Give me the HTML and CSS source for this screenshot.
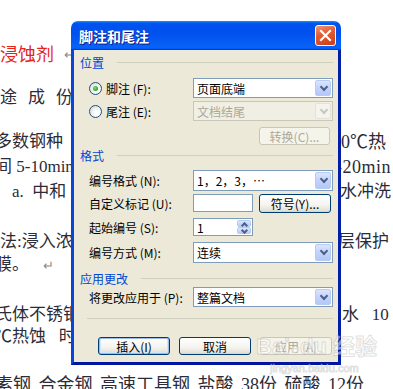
FILE: index.html
```html
<!DOCTYPE html>
<html lang="zh-CN">
  <head>
    <meta charset="UTF-8" />
    <title>脚注和尾注</title>
    <link rel="stylesheet" href="styles.css">
  </head>
  <body>
    <div class="doc">
      <div class="line first"><span class="red">浸蚀剂</span><span class="ret">↵</span></div>
      <div class="line gap-21"><span class="spaced">途成份</span></div>
      <div class="line gap-22"><span class="l cut">多数钢种</span><span class="r back">30℃热</span></div>
      <div class="line gap-3"><span class="l cut">间 5-10min</span><span class="r wide">-20min</span></div>
      <div class="line gap-3"><span class="l indent">a.&nbsp;&nbsp;中和</span><span class="r in4">水冲洗</span></div>
      <div class="line gap-28"><span class="l">法:浸入浓</span><span class="r in2">层保护</span></div>
      <div class="line gap-1"><span class="l cut">膜。 <span class="ret">↵</span></span></div>
      <div class="line gap-28"><span class="l cut">氏体不锈钢</span><span class="r in6">水&nbsp;&nbsp; 10</span></div>
      <div class="line gap-0"><span class="l cut">℃热蚀&nbsp;&nbsp; 时</span></div>
      <div class="line gap-26"><span class="cut last">素钢 合金钢 高速工具钢 盐酸 38份 硫酸 12份</span></div>
    </div>

    <div class="dialog">
      <div class="titlebar">
        <span class="title">脚注和尾注</span>
        <span class="close">
          <svg width="13" height="13" viewBox="0 0 13 13">
            <path d="M2 2 L11 11 M11 2 L2 11" stroke="#fff" stroke-width="2.2" stroke-linecap="square" />
          </svg>
        </span>
      </div>

      <div class="panel">
        <div class="group">位置</div>

        <div class="row sp-8">
          <span class="label"><span class="radio checked"></span>脚注 (F):</span>
          <span class="combo"><span class="value">页面底端</span><span class="drop"></span></span>
        </div>
        <div class="row sp-3">
          <span class="label"><span class="radio"></span>尾注 (E):</span>
          <span class="combo disabled"><span class="value">文档结尾</span><span class="drop"></span></span>
        </div>
        <div class="row end sp-6">
          <span class="btn disabled convert">转换(C)...</span>
        </div>

        <div class="group sp-2">格式</div>

        <div class="row tall sp-7">
          <span class="label">编号格式 (N):</span>
          <span class="combo"><span class="value">1，2，3，…</span><span class="drop"></span></span>
        </div>
        <div class="row short sp-3">
          <span class="label">自定义标记 (U):</span>
          <span class="field"></span>
          <span class="btn symbol">符号(Y)...</span>
        </div>
        <div class="row short sp-6">
          <span class="label">起始编号 (S):</span>
          <span class="field spin">
            <span class="value">1</span>
            <span class="spinner"><span class="up"></span><span class="down"></span></span>
          </span>
        </div>
        <div class="row tall sp-6">
          <span class="label">编号方式 (M):</span>
          <span class="combo"><span class="value">连续</span><span class="drop"></span></span>
        </div>

        <div class="group sp-7">应用更改</div>

        <div class="row sp-1">
          <span class="label">将更改应用于 (P):</span>
          <span class="combo"><span class="value">整篇文档</span><span class="drop"></span></span>
        </div>

        <div class="separator"></div>

        <div class="actions">
          <span class="btn default">插入(I)</span>
          <span class="btn">取消</span>
          <span class="btn disabled">应用 (A)</span>
        </div>
      </div>
    </div>

    <div class="watermark">
      <div class="brand">Bai<span class="paw">●</span>du 经验</div>
      <div class="site">jingyan.baidu.com</div>
    </div>
  </body>
</html>
```

FILE: styles.css
```css
* {
  box-sizing: border-box;
}

html,
body {
  background-color: #fff;
  height: 100%;
  margin: 0;
  overflow: hidden;
}

body {
  font-family: "Liberation Serif", "Noto Sans CJK SC", serif;
  position: relative;
}

/* document behind the dialog */

.doc {
  color: #2c2c38;
  font-size: 17px;
  padding-top: 44px;
}

.line {
  display: flex;
  height: 22px;
  line-height: 22px;
  white-space: nowrap;
}

.gap-0 { margin-top: 0; }
.gap-1 { margin-top: 1px; }
.gap-3 { margin-top: 3px; }
.gap-21 { margin-top: 21px; }
.gap-22 { margin-top: 22px; }
.gap-26 { margin-top: 26px; }
.gap-28 { margin-top: 28px; }

.red {
  color: #e8231c;
  font-size: 18px;
}

.ret {
  color: #8a8a8a;
  font-size: 13px;
  margin-left: 10px;
}

.spaced {
  letter-spacing: 11px;
}

.cut {
  margin-left: -5px;
}

.l {
  flex: none;
  width: 336px;
}

.line .cut.l {
  width: 341px;
}

.l.indent {
  padding-left: 12px;
}

.r {
  flex: none;
}

.r.back {
  font-size: 18px;
  margin-left: -4px;
}

.r.wide {
  font-size: 18px;
  letter-spacing: 0.5px;
}

.r.in2 {
  padding-left: 2px;
}

.r.in4 {
  padding-left: 4px;
}

.r.in6 {
  padding-left: 6px;
}

.last {
  font-size: 18px;
  word-spacing: 3px;
}

/* dialog */

.dialog {
  color: #000;
  display: flex;
  flex-direction: column;
  font-family: "Noto Sans CJK SC", "Liberation Sans", sans-serif;
  font-size: 12px;
  height: 344px;
  left: 71px;
  position: absolute;
  top: 21px;
  width: 270px;
}

.titlebar {
  align-items: center;
  background: linear-gradient(180deg, #0997ff, #0053ee 8%, #0050ee 40%, #0862f6 88%, #0560f5 93%, #005bff 95%, #003dd7 96%, #003dd7);
  border-radius: 7px 7px 0 0;
  display: flex;
  flex: none;
  height: 29px;
  justify-content: space-between;
  padding: 0 5px 0 8px;
}

.title {
  color: #fff;
  font-size: 14px;
  font-weight: bold;
  text-shadow: 1px 1px 0 #0a1883;
}

.close {
  align-items: center;
  background: linear-gradient(160deg, #f39375, #e35d36 40%, #d4471f 80%, #c83e18);
  border: 1px solid #fff;
  border-radius: 3px;
  display: flex;
  height: 21px;
  justify-content: center;
  width: 21px;
}

.panel {
  background-color: #ece9d8;
  border: 3px solid #0a45d8;
  border-bottom-color: #0016a0;
  border-right-color: #001ea8;
  border-top: none;
  display: flex;
  flex: 1;
  flex-direction: column;
  padding: 4px 5px 0 6px;
}

.group {
  align-items: center;
  color: #0046d5;
  display: flex;
  gap: 13px;
  height: 16px;
}

.group::after {
  background-color: #d0d0bf;
  content: "";
  flex: 1;
  height: 1px;
}

.sp-1 { margin-top: 1px; }
.sp-2 { margin-top: 2px; }
.sp-3 { margin-top: 3px; }
.sp-6 { margin-top: 6px; }
.sp-7 { margin-top: 7px; }
.sp-8 { margin-top: 8px; }

.row {
  align-items: center;
  display: flex;
  height: 20px;
  padding-left: 9px;
}

.row.tall {
  height: 21px;
}

.row.short {
  height: 18px;
}

.row.end {
  height: 18px;
  justify-content: flex-end;
  padding-right: 3px;
}

.label {
  align-items: center;
  display: flex;
  flex: none;
  gap: 4px;
  width: 104px;
}

.radio {
  align-items: center;
  background: radial-gradient(circle at 65% 65%, #fff 20%, #e6e6e0 70%, #cfcfc7);
  border: 1px solid #1c5180;
  border-radius: 50%;
  display: inline-flex;
  height: 13px;
  justify-content: center;
  width: 13px;
}

.radio.checked::after {
  background: radial-gradient(circle at 40% 40%, #7fe27f, #21a121 70%);
  border-radius: 50%;
  content: "";
  height: 5px;
  width: 5px;
}

.combo,
.field {
  align-items: center;
  background-color: #fff;
  border: 1px solid #7f9db9;
  display: flex;
  height: 100%;
  padding-left: 3px;
}

.combo {
  flex: 1;
}

.field {
  flex: none;
  width: 60px;
}

.value {
  flex: 1;
}

.drop {
  background: linear-gradient(180deg, #dbe5fd, #c3d3fd 50%, #b2c8f7);
  border: 1px solid #b8cbf4;
  border-radius: 2px;
  flex: none;
  height: calc(100% - 2px);
  margin: 1px;
  position: relative;
  width: 16px;
}

.drop::after,
.spinner span::after {
  border-bottom: 2px solid #4d6185;
  border-right: 2px solid #4d6185;
  content: "";
  height: 4px;
  left: 5px;
  position: absolute;
  top: 3px;
  transform: rotate(45deg);
  width: 4px;
}

.combo.disabled {
  background-color: #f1efe4;
  border-color: #c9c7ba;
  color: #aca899;
}

.combo.disabled .drop {
  background: #f4f3ee;
  border-color: #e4e2d8;
}

.combo.disabled .drop::after {
  border-color: #c9c7ba;
}

.spinner {
  display: flex;
  flex-direction: column;
  height: 100%;
  padding: 1px;
  width: 16px;
}

.spinner span {
  background: linear-gradient(180deg, #dbe5fd, #b8ccf8);
  border: 1px solid #b8cbf4;
  border-radius: 2px;
  flex: 1;
  position: relative;
}

.spinner span::after {
  border-width: 0 2px 2px 0;
  height: 3px;
  left: 4px;
  top: 0;
  width: 3px;
}

.spinner .up::after {
  top: 2px;
  transform: rotate(-135deg);
}

.btn {
  align-items: center;
  background: linear-gradient(180deg, #fff, #f4f3ee 60%, #e3e0d6 92%, #d6d0c5);
  border: 1px solid #003c74;
  border-radius: 3px;
  display: flex;
  flex: none;
  height: 18px;
  justify-content: center;
  width: 72px;
}

.btn.disabled {
  background: #f5f4ea;
  border-color: #c9c7ba;
  color: #aca899;
}

.convert {
  width: 71px;
}

.symbol {
  height: 19px;
  margin-left: 6px;
}

.btn.default {
  box-shadow: inset 0 0 0 1px #9cbbe9, inset 0 -1px 0 2px #cee7ff;
}

.separator {
  background-color: #d0d0bf;
  height: 1px;
  margin: 11px 0 0 7px;
  width: 246px;
}

.actions {
  display: flex;
  gap: 9px;
  justify-content: flex-end;
  margin-top: 18px;
  padding-right: 1px;
}

/* faint site watermark in the corner */

.watermark {
  color: rgba(255, 255, 255, 0.5);
  font-family: "Liberation Sans", "Noto Sans CJK SC", sans-serif;
  left: 256px;
  position: absolute;
  top: 334px;
  -webkit-text-stroke: 1px rgba(150, 150, 150, 0.3);
}

.brand {
  font-size: 22px;
  font-weight: bold;
  line-height: 26px;
}

.paw {
  font-size: 16px;
}

.site {
  font-size: 11px;
  line-height: 12px;
  padding-left: 14px;
}
```
